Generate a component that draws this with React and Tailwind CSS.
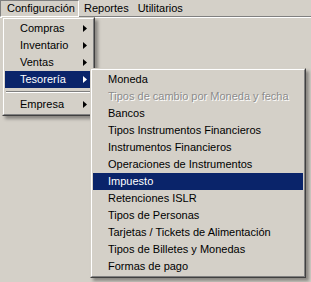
import React from "react";

const font = { fontFamily: '"Liberation Sans", Arial, sans-serif' };

function Arrow({ white }) {
  return (
    <svg width="4" height="7" viewBox="0 0 4 7" className="block">
      <path d="M0 0 L4 3.5 L0 7 Z" fill={white ? "#ffffff" : "#000000"} />
    </svg>
  );
}

function MenuFrame({ className, children }) {
  return (
    <div
      className={`absolute border border-t-[#d4d0c8] border-l-[#d4d0c8] border-r-[#404040] border-b-[#404040] bg-[#d4d0c8] shadow-[3px_3px_3px_rgba(0,0,0,0.35)] ${className}`}
    >
      <div className="border border-t-white border-l-white border-r-[#808080] border-b-[#808080] p-px">
        {children}
      </div>
    </div>
  );
}

function Item({ label, active, disabled, sub }) {
  return (
    <div
      className={`flex h-[17px] items-center justify-between pl-[15px] pr-[5px] text-[11px] leading-none ${
        active ? "bg-[#0a246a] text-white" : disabled ? "text-[#8c8c8c]" : "text-black"
      }`}
    >
      <span className={disabled ? "[text-shadow:1px_1px_0_#ffffff]" : ""}>{label}</span>
      {sub && <Arrow white={active} />}
    </div>
  );
}

const tesoreria = [
  "Moneda",
  "Tipos de cambio por Moneda y fecha",
  "Bancos",
  "Tipos Instrumentos Financieros",
  "Instrumentos Financieros",
  "Operaciones de Instrumentos",
  "Impuesto",
  "Retenciones ISLR",
  "Tipos de Personas",
  "Tarjetas / Tickets de Alimentación",
  "Tipos de Billetes y Monedas",
  "Formas de pago",
];

export default function App() {
  return (
    <div className="relative h-[282px] w-[311px] overflow-hidden bg-[#d4d0c8]" style={font}>
      {/* menu bar */}
      <div className="flex h-[16px] text-[11px] leading-none text-black">
        <div className="relative z-10 flex h-[17px] w-[79px] items-center border border-t-[#808080] border-l-[#808080] border-r-white border-b-white pl-[6px]">
          Configuración
        </div>
        <div className="flex h-[16px] items-center pl-[5px]">Reportes</div>
        <div className="flex h-[16px] items-center pl-[9px]">Utilitarios</div>
      </div>
      <div className="h-px bg-[#808080]" />
      <div className="h-px bg-white" />

      {/* Configuración dropdown */}
      <MenuFrame className="left-[2px] top-[17px] w-[93px]">
        <Item label="Compras" sub />
        <Item label="Inventario" sub />
        <Item label="Ventas" sub />
        <Item label="Tesorería" sub active />
        <div className="flex h-[8px] flex-col justify-center px-px">
          <div className="h-px bg-[#808080]" />
          <div className="h-px bg-white" />
        </div>
        <Item label="Empresa" sub />
      </MenuFrame>

      {/* Tesorería submenu */}
      <MenuFrame className="left-[90px] top-[68px] w-[216px]">
        {tesoreria.map((t, i) => (
          <Item key={t} label={t} active={t === "Impuesto"} disabled={i === 1} />
        ))}
      </MenuFrame>
    </div>
  );
}
